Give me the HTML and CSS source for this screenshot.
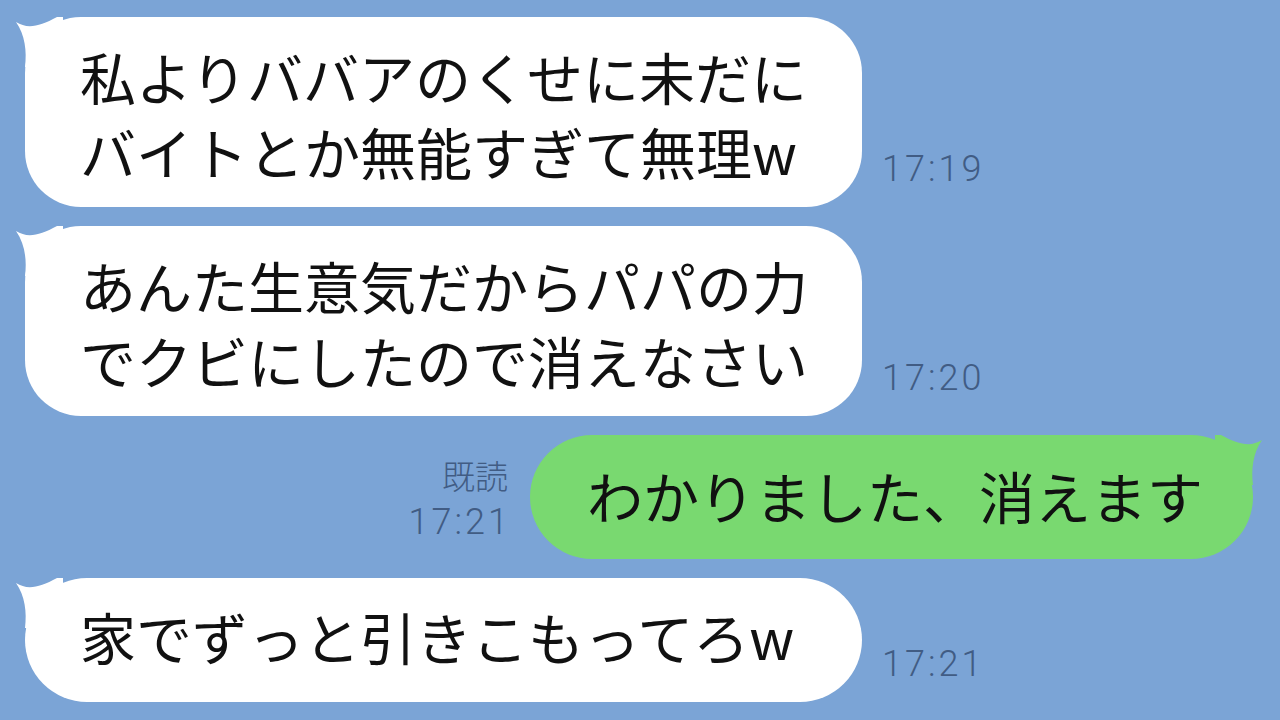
FILE: index.html
```html
<!DOCTYPE html>
<html lang="ja">
<head>
  <meta charset="UTF-8" />
  <meta name="viewport" content="width=device-width, initial-scale=1.0" />
  <title>トーク</title>
  <link rel="stylesheet" href="styles.css">
</head>
<body>
  <div class="chat">
    <div class="row">
      <div class="bubble in tall">
        <svg class="tail" viewBox="0 0 50 50"><path d="M3 5 C14 12 26 10 44 0 L50 0 L50 50 L12 50 C14 34 12 18 3 5 Z"/></svg>
        私よりババアのくせに未だに<br>バイトとか無能すぎて無理w
      </div>
      <div class="meta"><span class="time">17:19</span></div>
    </div>

    <div class="row">
      <div class="bubble in tall">
        <svg class="tail" viewBox="0 0 50 50"><path d="M3 5 C14 12 26 10 44 0 L50 0 L50 50 L12 50 C14 34 12 18 3 5 Z"/></svg>
        あんた生意気だからパパの力<br>でクビにしたので消えなさい
      </div>
      <div class="meta"><span class="time">17:20</span></div>
    </div>

    <div class="row mine">
      <div class="meta">
        <span class="read">既読</span>
        <span class="time">17:21</span>
      </div>
      <div class="bubble out">
        <svg class="tail" viewBox="0 0 50 50"><path d="M47 5 C36 12 24 10 6 0 L0 0 L0 50 L38 50 C36 34 38 18 47 5 Z"/></svg>
        わかりました、消えます
      </div>
    </div>

    <div class="row">
      <div class="bubble in">
        <svg class="tail" viewBox="0 0 50 50"><path d="M3 5 C14 12 26 10 44 0 L50 0 L50 50 L12 50 C14 34 12 18 3 5 Z"/></svg>
        家でずっと引きこもってろw
      </div>
      <div class="meta"><span class="time">17:21</span></div>
    </div>
  </div>
</body>
</html>
```

FILE: styles.css
```css
body {
  margin: 0;
  background-color: #7ba4d6;
  font-family: 'Noto Sans CJK JP', 'Noto Sans', sans-serif;
  width: 1280px;
  height: 720px;
  overflow: hidden;
}
.chat {
  display: flex;
  flex-direction: column;
  gap: 19px;
  padding: 17px 27px 0 25px;
}
.row {
  display: flex;
  align-items: flex-end;
}
.row.mine {
  justify-content: flex-end;
}
.bubble {
  position: relative;
  box-sizing: border-box;
  font-size: 56px;
  color: #111;
  white-space: nowrap;
}
.bubble.in {
  background-color: #fff;
  width: 837px;
  height: 124px;
  padding: 0 0 4px 55px;
  border-radius: 62px;
  line-height: 116px;
}
.bubble.tall {
  height: 190px;
  line-height: 75px;
  padding: 21px 0 17px 55px;
  border-radius: 56px;
}
.bubble.out {
  background-color: #79d970;
  width: 723px;
  height: 124px;
  padding: 0 0 0 57px;
  border-radius: 62px;
  line-height: 120px;
}
.tail {
  position: absolute;
  top: 0;
  width: 50px;
  height: 50px;
}
.bubble.in .tail {
  left: -12px;
  fill: #fff;
}
.bubble.out .tail {
  right: -12px;
  fill: #79d970;
}
.meta {
  display: flex;
  flex-direction: column;
  color: #415c84;
  line-height: 1;
}
.row .meta {
  margin: 0 0 20px 20px;
}
.row.mine .meta {
  margin: 0 22px 19px 0;
  align-items: flex-end;
}
.time {
  font-family: Roboto, 'Noto Sans', sans-serif;
  font-size: 36px;
  font-weight: 300;
  letter-spacing: 3px;
  margin-right: -3px;
}
.read {
  font-size: 33px;
  font-weight: 300;
  margin-bottom: 12px;
}
```
